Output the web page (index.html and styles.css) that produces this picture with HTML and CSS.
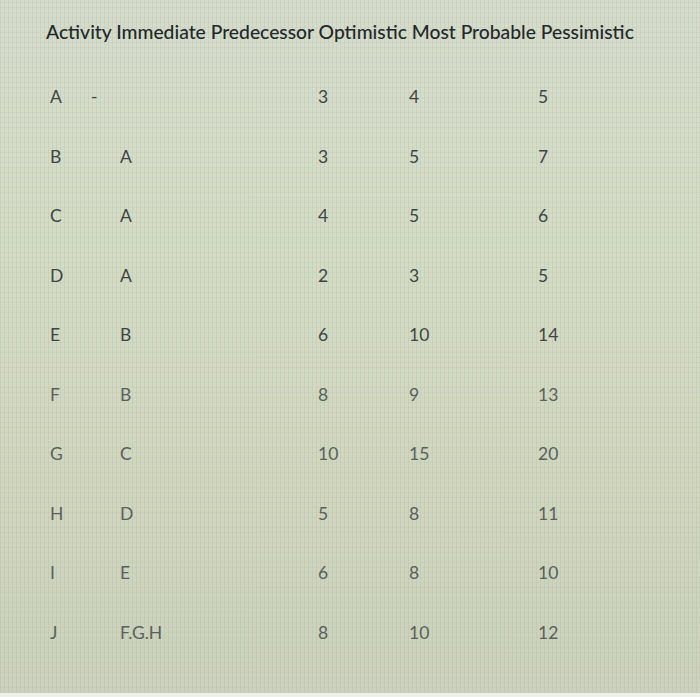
FILE: index.html
```html
<!DOCTYPE html>
<html>
<head>
<meta charset="utf-8">
<link rel="stylesheet" href="styles.css">
</head>
<body>
<div class="screen">
  <div class="title">Activity Immediate Predecessor Optimistic Most Probable Pessimistic</div>
  <div class="table">
    <div class="row"><span>A</span><span class="dash">-</span><span>3</span><span>4</span><span>5</span></div>
    <div class="row"><span>B</span><span>A</span><span>3</span><span>5</span><span>7</span></div>
    <div class="row"><span>C</span><span>A</span><span>4</span><span>5</span><span>6</span></div>
    <div class="row"><span>D</span><span>A</span><span>2</span><span>3</span><span>5</span></div>
    <div class="row"><span>E</span><span>B</span><span>6</span><span>10</span><span>14</span></div>
    <div class="row light"><span>F</span><span>B</span><span>8</span><span>9</span><span>13</span></div>
    <div class="row light"><span>G</span><span>C</span><span>10</span><span>15</span><span>20</span></div>
    <div class="row light"><span>H</span><span>D</span><span>5</span><span>8</span><span>11</span></div>
    <div class="row light"><span>I</span><span>E</span><span>6</span><span>8</span><span>10</span></div>
    <div class="row light"><span>J</span><span>F.G.H</span><span>8</span><span>10</span><span>12</span></div>
  </div>
</div>
</body>
</html>
```
FILE: styles.css
```css
html, body {
  margin: 0;
  padding: 0;
  width: 700px;
  height: 697px;
  overflow: hidden;
  background: #eef0ea;
}
.screen {
  width: 700px;
  height: 693px;
  box-sizing: border-box;
  padding: 20px 0 0 0;
  font-family: Lato, "Open Sans", sans-serif;
  background:
    repeating-linear-gradient(90deg, rgba(110,150,130,0.12) 0 1px, rgba(255,255,255,0) 1px 4px),
    repeating-linear-gradient(0deg, rgba(150,165,200,0.10) 0 1px, rgba(255,255,255,0) 1px 5px),
    linear-gradient(180deg, #d6dcca 0%, #d5dcc4 35%, #d0d7bd 70%, #ccd2bb 100%);
}
.title {
  margin-left: 46px;
  font-size: 19.3px;
  line-height: 24px;
  color: #23282a;
  font-weight: 500;
  white-space: nowrap;
}
.table {
  margin-top: 23px;
  display: flex;
  flex-direction: column;
}
.row {
  height: 59.5px;
  display: grid;
  grid-template-columns: 70px 198px 91px 129px 1fr;
  align-items: center;
  padding-left: 50px;
  font-size: 17.5px;
  color: #3f4545;
}
.row.light {
  color: #5a605d;
}
.dash {
  margin-left: -29px;
}
```
